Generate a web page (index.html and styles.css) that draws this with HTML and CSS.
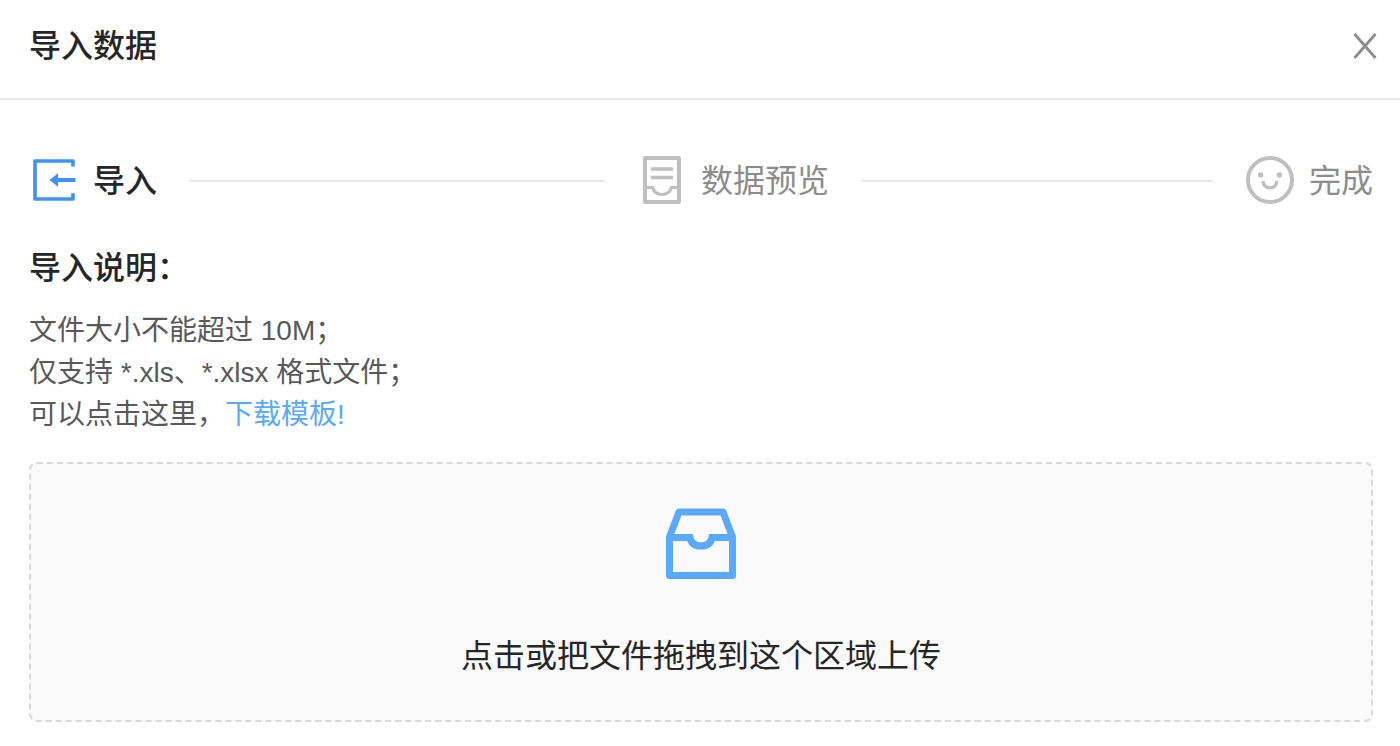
FILE: index.html
```html
<!DOCTYPE html>
<html lang="zh-CN">

<head>
    <meta charset="UTF-8">
    <meta name="viewport" content="width=device-width, initial-scale=1.0">
    <title>导入数据</title>
    <link rel="stylesheet" href="styles.css">
</head>

<body>
    <header class="modal-header">
        <h1 class="modal-title">导入数据</h1>
        <button class="close-btn" type="button" aria-label="关闭">
            <svg width="24" height="26" viewBox="0 0 24 26">
                <path d="M1.5 1L22.5 25M22.5 1L1.5 25" fill="none" stroke="currentColor" stroke-width="2.8" />
            </svg>
        </button>
    </header>

    <main class="modal-body">
        <!-- 步骤条 -->
        <ol class="steps">
            <li class="step active">
                <svg class="step-icon" viewBox="0 0 48 48">
                    <path d="M44 10.5V5H6V43H44V37.3" fill="none" stroke="currentColor" stroke-width="3.6" stroke-linejoin="round" />
                    <path d="M28 24H46.5" fill="none" stroke="currentColor" stroke-width="4" />
                    <path d="M20.5 24L29 17.2V30.8Z" fill="currentColor" />
                </svg>
                <span class="step-title">导入</span>
            </li>
            <li class="step">
                <svg class="step-icon" viewBox="0 0 48 48">
                    <rect x="8" y="2" width="34" height="44" fill="none" stroke="currentColor" stroke-width="4" stroke-linejoin="round" />
                    <path d="M14 13H36M14 21.5H36" fill="none" stroke="currentColor" stroke-width="3.4" />
                    <path d="M8 31.5H15.5C17 36 20.5 38.5 25 38.5S33 36 34.5 31.5H42" fill="none" stroke="currentColor" stroke-width="3.2" />
                </svg>
                <span class="step-title">数据预览</span>
            </li>
            <li class="step">
                <svg class="step-icon" viewBox="0 0 48 48">
                    <circle cx="25" cy="24" r="22" fill="none" stroke="currentColor" stroke-width="4" />
                    <circle cx="15.6" cy="19" r="2.7" fill="currentColor" />
                    <circle cx="34.4" cy="19" r="2.7" fill="currentColor" />
                    <path d="M18 25C18.4 29.5 21.3 31.8 25 31.8S31.6 29.5 32 25" fill="none" stroke="currentColor" stroke-width="3.2" />
                </svg>
                <span class="step-title">完成</span>
            </li>
        </ol>

        <section class="notice">
            <h2 class="notice-title">导入说明：</h2>
            <p>文件大小不能超过 10M；</p>
            <p>仅支持 *.xls、*.xlsx 格式文件；</p>
            <p>可以点击这里，<a class="download-link" href="#">下载模板!</a></p>
        </section>

        <!-- 上传区域 -->
        <label class="upload-area" for="upload-file">
            <input class="upload-input" type="file" id="upload-file" accept=".xls,.xlsx">
            <svg class="upload-icon" width="72" height="72" viewBox="0 0 72 72">
                <g fill="none" stroke="currentColor" stroke-width="7" stroke-linejoin="round">
                    <path d="M4.5 29L14 4H58L67.5 29V67.5H4.5Z" />
                    <path d="M4.5 29.5H25C26 35 30 38 36 38S46 35 47 29.5H67.5" stroke-linejoin="miter" />
                </g>
            </svg>
            <span class="upload-text">点击或把文件拖拽到这个区域上传</span>
        </label>
    </main>
</body>

</html>
```

FILE: styles.css
```css
* {
    box-sizing: border-box;
}

body {
    margin: 0;
    background-color: #fff;
    color: #262626;
    font-family: "Liberation Sans", "Noto Sans CJK SC", sans-serif;
    font-size: 28px;
    line-height: 42px;
}

h1,
h2,
p,
ol {
    margin: 0;
    padding: 0;
}

.modal-header {
    display: flex;
    justify-content: space-between;
    align-items: center;
    padding: 22px 23px 28px 29px;
    border-bottom: 2px solid #e8e8e8;
}

.modal-title,
.notice-title {
    font-size: 32px;
    font-weight: 500;
    line-height: 48px;
}

.close-btn {
    display: flex;
    padding: 0;
    border: none;
    background: none;
    color: #8c8c8c;
    cursor: pointer;
}

.modal-body {
    padding: 56px 27px 24px 29px;
}

.steps {
    display: flex;
    gap: 32px;
    list-style: none;
}

.step {
    display: flex;
    align-items: center;
    gap: 16px;
    color: #bfbfbf;
}

.step:not(:last-child) {
    flex: 1;
}

/* 步骤之间的连接线 */
.step:not(:last-child)::after {
    content: "";
    flex: 1;
    height: 2px;
    margin-left: 16px;
    background-color: #e8e8e8;
}

.step-icon {
    align-self: flex-start;
    width: 48px;
    height: 48px;
    overflow: visible;
}

.step-title {
    color: #8c8c8c;
    font-size: 32px;
    line-height: 50px;
}

.step.active {
    color: #4090f7;
}

.step.active .step-title {
    color: #262626;
    font-weight: 500;
}

.notice {
    padding: 38px 0 26px;
    color: #595959;
}

.notice-title {
    margin-bottom: 18px;
    color: #262626;
}

.download-link {
    color: #5aa9fa;
    text-decoration: none;
}

.upload-area {
    display: flex;
    flex-direction: column;
    align-items: center;
    padding: 44px 16px 40px;
    border: 2px dashed #d9d9d9;
    border-radius: 8px;
    background-color: #fafafa;
    cursor: pointer;
}

.upload-area:focus-within {
    border-color: #5aa9fa;
}

.upload-input {
    width: 0;
    height: 0;
    opacity: 0;
}

.upload-icon {
    margin-bottom: 52px;
    color: #5aa9fa;
}

.upload-text {
    font-size: 32px;
    line-height: 48px;
}
```
